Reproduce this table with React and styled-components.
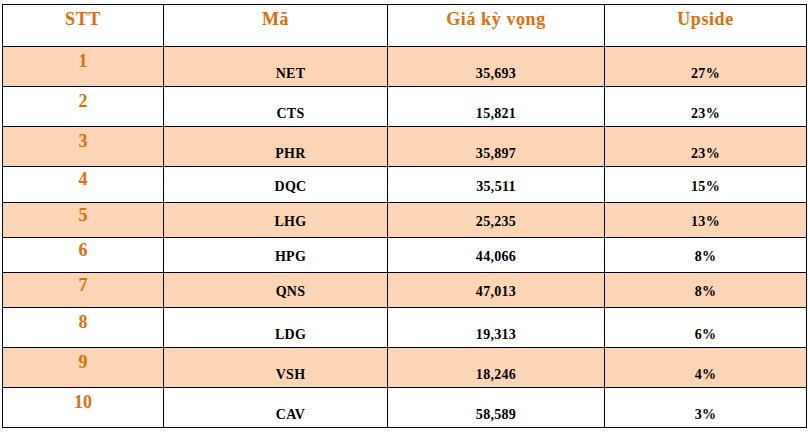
import React from 'react';
import styled, { createGlobalStyle } from 'styled-components';

const GlobalStyle = createGlobalStyle`
  html, body {
    margin: 0;
    padding: 0;
    background: #ffffff;
  }
  body {
    padding: 4px 0 0 2px;
    font-family: "Liberation Serif", "Times New Roman", serif;
  }
`;

const Table = styled.table`
  border-collapse: collapse;
  table-layout: fixed;
  width: 804px;
`;

const Row = styled.tr`
  height: ${props => props.$h}px;
  background: ${props => (props.$shaded ? '#fbd5b5' : '#ffffff')};
`;

const HeadCell = styled.th`
  border: 1px solid #000;
  padding: 5px 0 0;
  vertical-align: top;
  text-align: center;
  color: #e46c0a;
  font-size: 18px;
  line-height: 18px;
  font-weight: bold;
  letter-spacing: 0.6px;
`;

const IndexCell = styled.td`
  border: 1px solid #000;
  padding: ${props => (props.$tight ? 3 : 5)}px 0 0;
  vertical-align: top;
  text-align: center;
  color: #e46c0a;
  font-size: 18px;
  line-height: 18px;
  font-weight: bold;
`;

const ValueCell = styled.td`
  border: 1px solid #000;
  padding: 0 0 ${props => (props.$tight ? 8 : 5)}px ${props => props.$shift || 0}px;
  vertical-align: bottom;
  text-align: center;
  color: #000;
  font-size: 14px;
  line-height: 14px;
  font-weight: bold;
  letter-spacing: 0.3px;
`;

const rows = [
  { code: 'NET', price: '35,693', upside: '27%', h: 40 },
  { code: 'CTS', price: '15,821', upside: '23%', h: 40 },
  { code: 'PHR', price: '35,897', upside: '23%', h: 40 },
  { code: 'DQC', price: '35,511', upside: '15%', h: 36 },
  { code: 'LHG', price: '25,235', upside: '13%', h: 35 },
  { code: 'HPG', price: '44,066', upside: '8%', h: 35 },
  { code: 'QNS', price: '47,013', upside: '8%', h: 35 },
  { code: 'LDG', price: '19,313', upside: '6%', h: 40 },
  { code: 'VSH', price: '18,246', upside: '4%', h: 40 },
  { code: 'CAV', price: '58,589', upside: '3%', h: 40 },
];

export default function App() {
  return (
    <>
      <GlobalStyle />
      <Table>
        <colgroup>
          <col style={{ width: 161 }} />
          <col style={{ width: 224 }} />
          <col style={{ width: 217 }} />
          <col style={{ width: 202 }} />
        </colgroup>
        <thead>
          <Row $h={42}>
            <HeadCell>STT</HeadCell>
            <HeadCell>Mã</HeadCell>
            <HeadCell>Giá kỳ vọng</HeadCell>
            <HeadCell>Upside</HeadCell>
          </Row>
        </thead>
        <tbody>
          {rows.map((r, i) => {
            const tight = r.h < 40;
            return (
              <Row key={r.code} $h={r.h} $shaded={i % 2 === 0}>
                <IndexCell $tight={tight}>{i + 1}</IndexCell>
                <ValueCell $tight={tight} $shift={30}>{r.code}</ValueCell>
                <ValueCell $tight={tight}>{r.price}</ValueCell>
                <ValueCell $tight={tight}>{r.upside}</ValueCell>
              </Row>
            );
          })}
        </tbody>
      </Table>
    </>
  );
}
